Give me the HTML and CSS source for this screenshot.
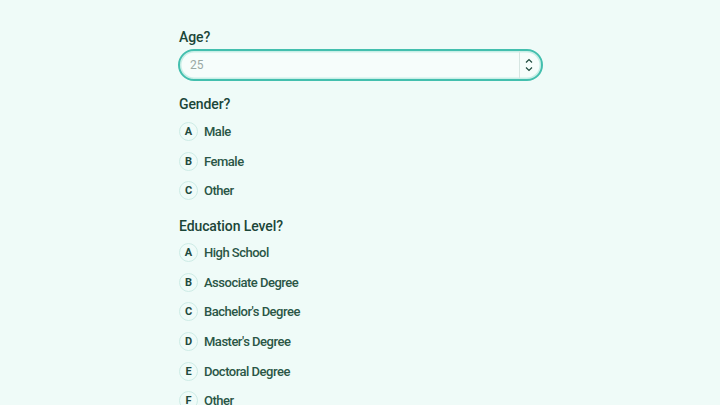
FILE: index.html
```html
<!DOCTYPE html>
<html>
<head>
<meta charset="utf-8">
<link rel="stylesheet" href="styles.css">
</head>
<body>
<main class="form">
  <section class="question">
    <h2 class="label">Age?</h2>
    <div class="field">
      <span class="value">25</span>
      <span class="spin">
        <svg width="8" height="14" viewBox="0 0 8 14"><path d="M1 4.5 L4 1.5 L7 4.5" fill="none" stroke="#1f4a3e" stroke-width="1.2"/><path d="M1 9.5 L4 12.5 L7 9.5" fill="none" stroke="#1f4a3e" stroke-width="1.2"/></svg>
      </span>
    </div>
  </section>
  <section class="question">
    <h2 class="label">Gender?</h2>
    <ul class="options">
      <li class="option"><span class="key">A</span><span class="text">Male</span></li>
      <li class="option"><span class="key">B</span><span class="text">Female</span></li>
      <li class="option"><span class="key">C</span><span class="text">Other</span></li>
    </ul>
  </section>
  <section class="question question-spaced">
    <h2 class="label">Education Level?</h2>
    <ul class="options">
      <li class="option"><span class="key">A</span><span class="text">High School</span></li>
      <li class="option"><span class="key">B</span><span class="text">Associate Degree</span></li>
      <li class="option"><span class="key">C</span><span class="text">Bachelor's Degree</span></li>
      <li class="option"><span class="key">D</span><span class="text">Master's Degree</span></li>
      <li class="option"><span class="key">E</span><span class="text">Doctoral Degree</span></li>
      <li class="option"><span class="key">F</span><span class="text">Other</span></li>
    </ul>
  </section>
</main>
</body>
</html>
```
FILE: styles.css
```css
html, body {
  margin: 0;
  padding: 0;
  background: #effbf8;
  overflow: hidden;
  height: 405px;
}
body {
  font-family: "Roboto", "Lato", sans-serif;
  color: #1e4a3d;
}
.form {
  width: 364px;
  margin: 0 0 0 179px;
  padding-top: 28px;
  display: flex;
  flex-direction: column;
  gap: 14px;
}
.question {
  display: flex;
  flex-direction: column;
}
.question-spaced {
  margin-top: 3px;
}
.label {
  margin: 0 0 3px 0;
  font-size: 14px;
  font-weight: 500;
  line-height: 18px;
  letter-spacing: -0.1px;
  color: #1b4638;
}
.field {
  box-sizing: border-box;
  height: 32px;
  margin-left: -1px;
  border: 2px solid #43bfae;
  border-radius: 16px;
  background: #f6fdfb;
  box-shadow: inset 0 0 0 1.5px #c9efe7;
  display: flex;
  align-items: center;
  padding-left: 10px;
}
.value {
  flex: 1;
  font-size: 12px;
  color: #9aa9a4;
}
.spin {
  height: 28px;
  width: 17px;
  border-left: 1px solid #d6e6e2;
  display: flex;
  align-items: center;
  justify-content: center;
  margin-right: 4px;
}
.options {
  list-style: none;
  margin: 0;
  padding: 6px 0 0 0;
  display: flex;
  flex-direction: column;
  gap: 10.6px;
}
.question-spaced .options {
  padding-top: 5px;
}
.option {
  display: flex;
  align-items: center;
  gap: 6px;
  height: 19px;
}
.key {
  box-sizing: border-box;
  width: 19px;
  height: 19px;
  border-radius: 50%;
  border: 1.5px solid #cdece6;
  display: flex;
  align-items: center;
  justify-content: center;
  font-size: 11px;
  font-weight: 700;
  color: #1e4a3d;
}
.text {
  font-size: 13px;
  font-weight: 500;
  letter-spacing: -0.5px;
  color: #2a5646;
}
```
